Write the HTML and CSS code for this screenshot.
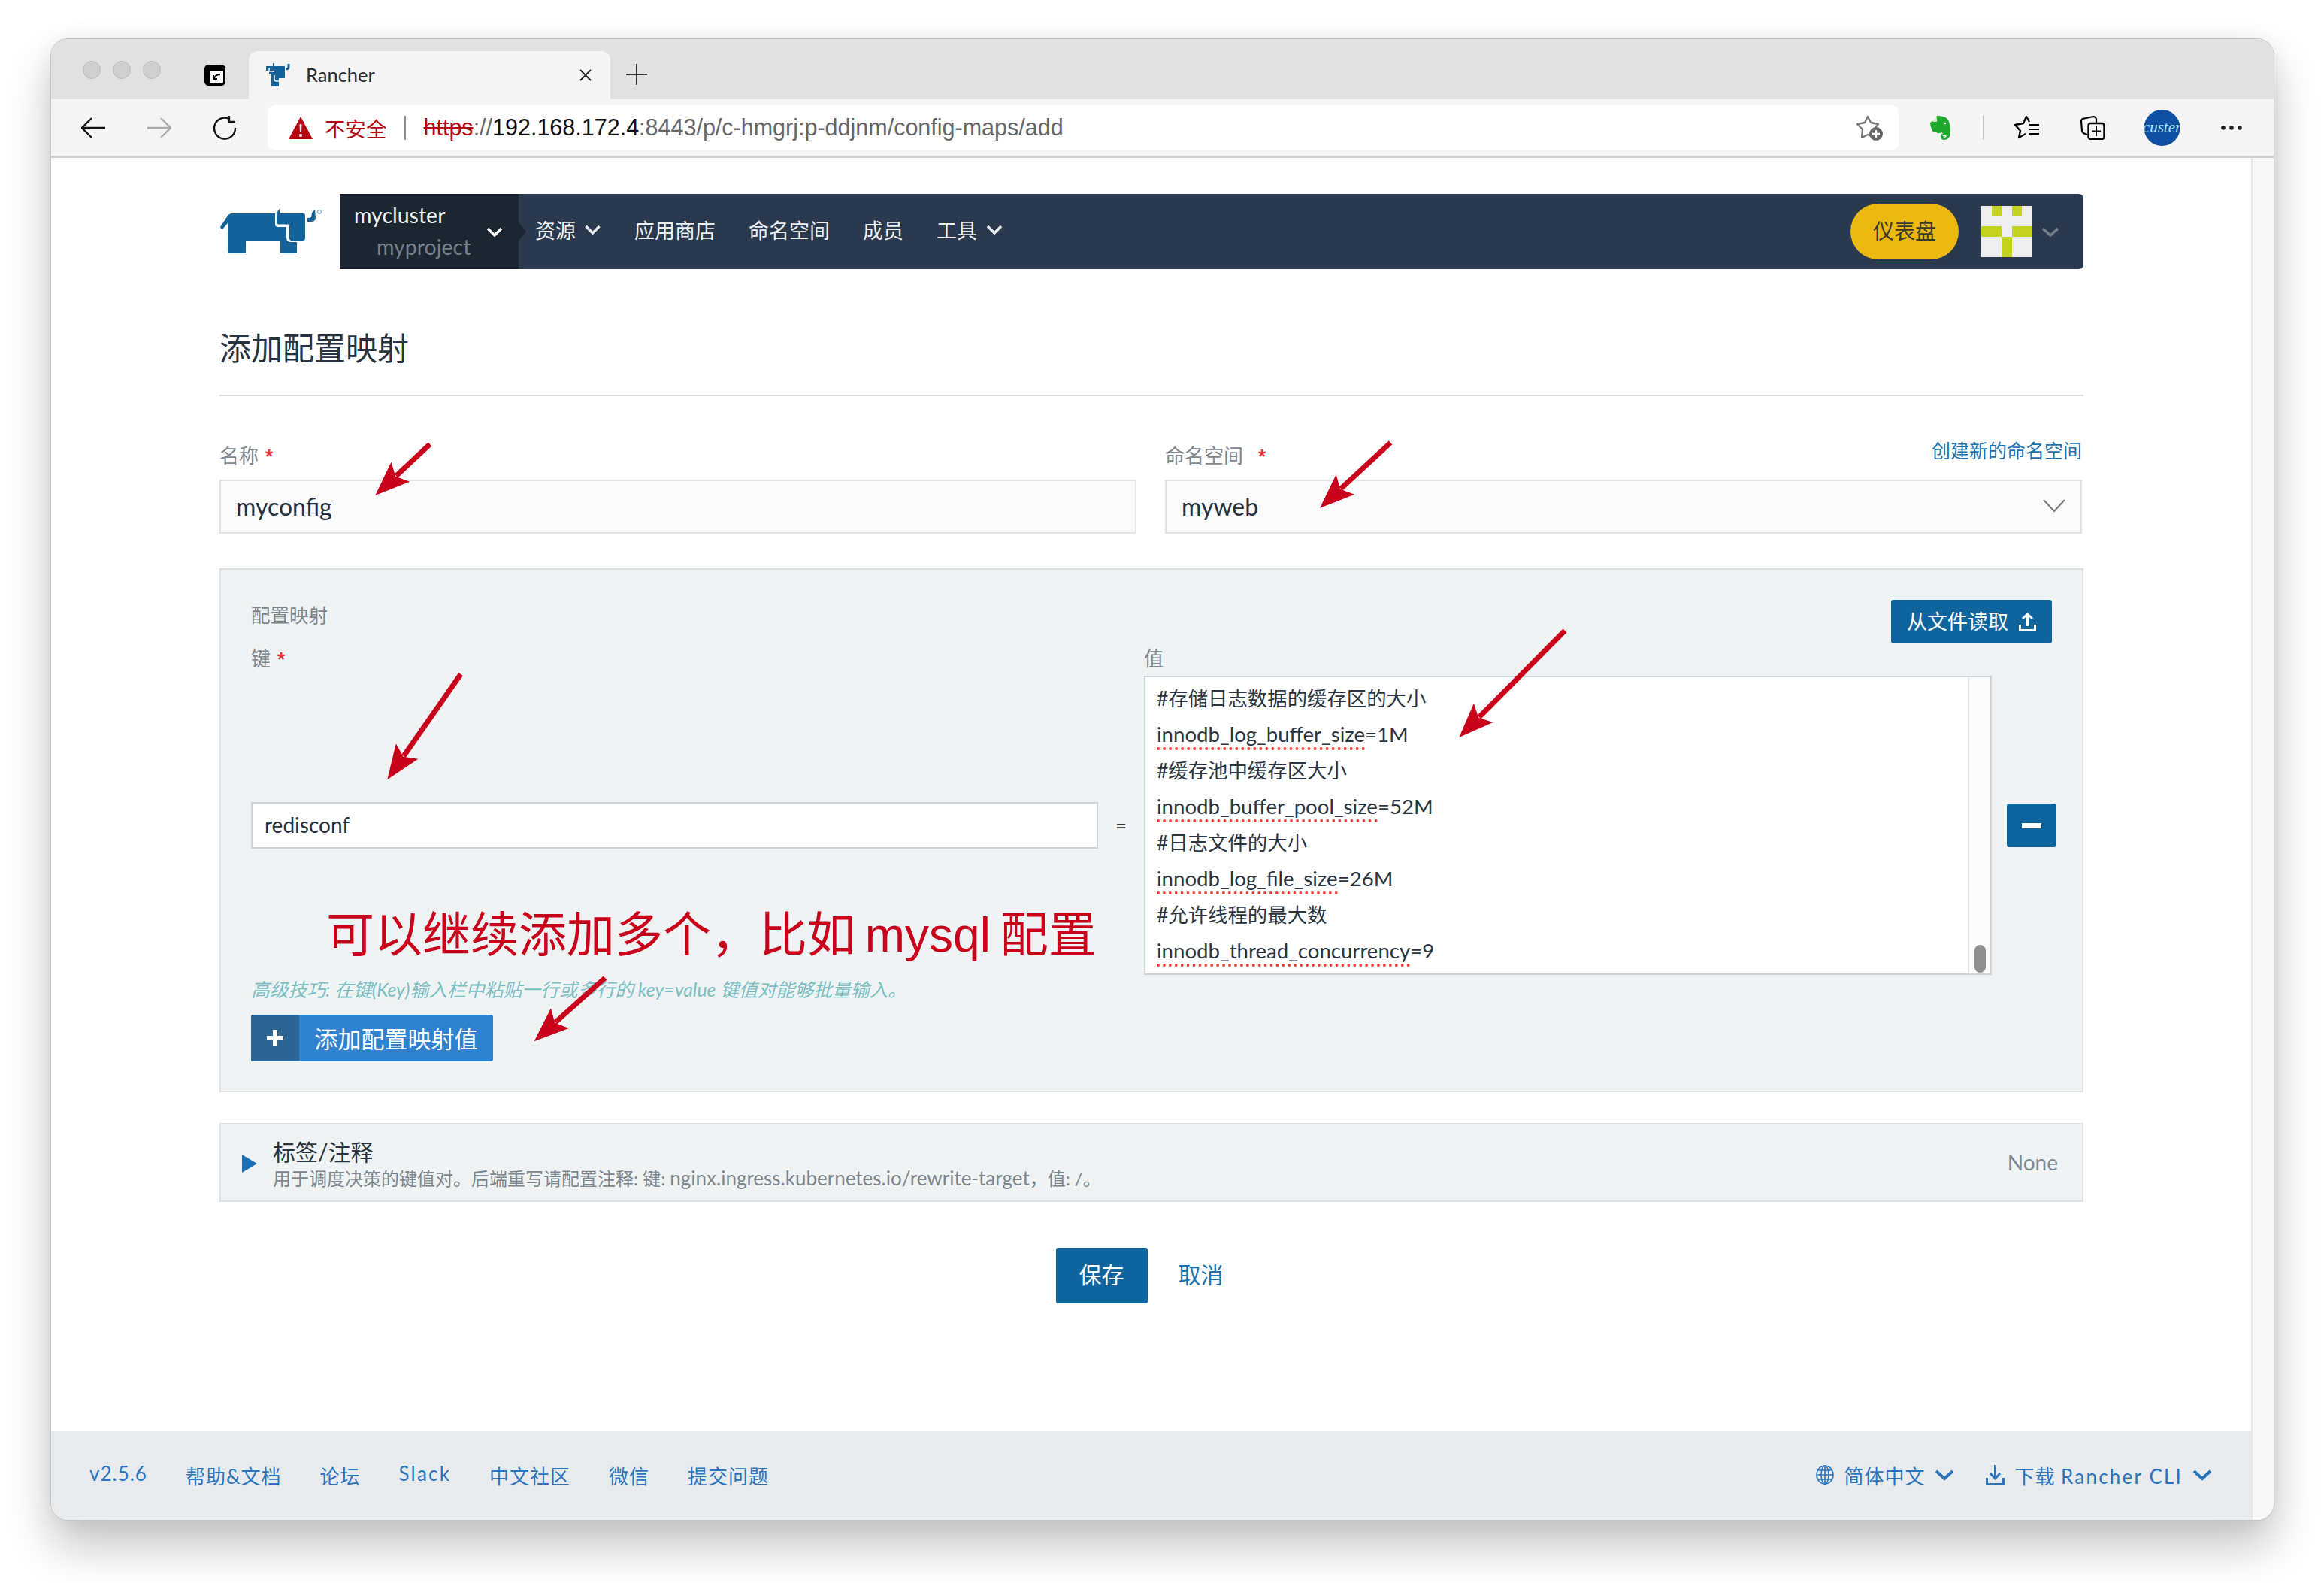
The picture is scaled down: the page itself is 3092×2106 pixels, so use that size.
FILE: index.html
```html
<!DOCTYPE html>
<html lang="zh-CN">
<head>
    <meta charset="UTF-8">
    <title>Rancher</title>
    <link rel="stylesheet" href="styles.css">
</head>
<body>

    <div class="window">
        <div class="tabbar">
            <div class="lights"><i></i><i></i><i></i></div>
            <svg class="tablist" width="28" height="28" viewBox="0 0 28 28">
                <rect x="1.500" y="1.500" width="25" height="25" rx="4" fill="#fff" stroke="#000" stroke-width="3"/>
                <path d="M2 2H26V8H8V26H2Z" fill="#000"/>
                <path d="M21 13Q15 13 12.500 18.500M12 14V19H17" fill="none" stroke="#000" stroke-width="2"/>
            </svg>
            <div class="tab">
                <svg class="favicon" width="34" height="31" viewBox="0 0 34 31">
                    <path fill="#14639b" d="M1 4H10V0L12 0V4H25Q26 4 26 5V19Q26 20 25 20H18V30Q18 31 17 31H9Q8 31 8 30V14H5V10H1Z"/>
                    <path fill="none" stroke="#f5f5f5" stroke-width="1.500" d="M5 6V11H12M12 16V22Q12 24 15 24H18"/>
                    <path fill="none" stroke="#14639b" stroke-width="3" d="M31 1V5Q31 8 27 8"/>
                </svg>
                <span class="tab-title">Rancher</span>
                <svg class="tab-close" width="16" height="16" viewBox="0 0 16 16"><path d="M1 1L15 15M15 1L1 15" stroke="#222" stroke-width="2"/></svg>
            </div>
            <svg class="tab-new" width="28" height="28" viewBox="0 0 28 28"><path d="M14 0V28M0 14H28" stroke="#333" stroke-width="2"/></svg>
        </div>

        <div class="toolbar">
            <svg class="tool-back" width="32" height="28" viewBox="0 0 32 28"><path d="M32 14H2M14 1L1 14L14 27" fill="none" stroke="#111" stroke-width="2.400"/></svg>
            <svg class="tool-forward" width="32" height="28" viewBox="0 0 32 28"><path d="M0 14H30M18 1L31 14L18 27" fill="none" stroke="#aaa" stroke-width="2.400"/></svg>
            <svg class="tool-reload" width="33" height="32" viewBox="0 0 33 32"><path d="M22 4A14 14 0 1 0 30 16" fill="none" stroke="#111" stroke-width="2.400"/><path d="M22 0V8H30" fill="none" stroke="#111" stroke-width="2.400"/></svg>
            <div class="address">
                <svg width="32" height="30" viewBox="0 0 32 30"><path d="M16 0L32 30H0Z" fill="#b5050e"/><path d="M14.500 10H17.500L17 21H15Z" fill="#fff"/><circle cx="16" cy="25" r="2" fill="#fff"/></svg>
                <span class="insecure">不安全</span>
                <span class="address-sep"></span>
                <span class="url"><s>https</s><em>://</em><b>192.168.172.4</b><em>:8443/p/c-hmgrj:p-ddjnm/config-maps/add</em></span>
                <svg class="star-add" width="36" height="34" viewBox="0 0 36 34">
                    <path d="M15 2L19 10L29 12L23 19L24 30L15 26L7 30L8 19L1 12L11 10Z" fill="none" stroke="#777" stroke-width="2.400" stroke-linejoin="round"/>
                    <circle cx="26" cy="25" r="9" fill="#666"/><path d="M26 20V30M21 25H31" stroke="#fff" stroke-width="2.400"/>
                </svg>
            </div>
            <svg class="ext-note" width="28" height="32" viewBox="0 0 28 32">
                <path fill="#1fa82e" d="M9 0Q14 0 17 1Q24 2 26 11Q28 20 26 27Q24 32 18 32Q13 31 14 26Q15 24 17 24Q16 22 15 22Q11 24 8 22Q3 22 2 18Q0 13 0 9L3 7H7Q8 6 8 3Z"/>
                <path fill="#cfe9cf" d="M9 2V8H3Z"/>
                <path fill="none" stroke="#fff" stroke-width="1.200" d="M17 27Q19 25 21 27Q20 29 18 28"/>
                <circle cx="20" cy="10" r="1.300" fill="#fff"/>
            </svg>
            <span class="tool-sep"></span>
            <svg class="tool-fav" width="33" height="31" viewBox="0 0 33 31"><path d="M20 8L16 1L12 10L1 12L8 20L6 29L15 24" fill="none" stroke="#000" stroke-width="2.400" stroke-linejoin="round"/><path d="M20 12H33M20 18H33M20 24H33" stroke="#000" stroke-width="2.200"/></svg>
            <svg class="tool-coll" width="33" height="32" viewBox="0 0 33 32"><path d="M9 25L4 23Q2 22 2 20L1 7Q1 5 3 4L17 1Q20 1 21 4V9" fill="none" stroke="#000" stroke-width="2.200"/><rect x="10.500" y="10" width="21" height="21" rx="3" fill="none" stroke="#000" stroke-width="2.400"/><path d="M21 14V27M15 20.500H27" stroke="#000" stroke-width="2"/></svg>
            <svg class="profile" width="49" height="48" viewBox="0 0 49 48"><circle cx="24.500" cy="24" r="24" fill="#0f4fa3"/><text x="24.500" y="30" text-anchor="middle" class="profile-text">custer</text></svg>
            <svg class="tool-more" width="28" height="6" viewBox="0 0 28 6"><circle cx="3" cy="3" r="2.800"/><circle cx="14" cy="3" r="2.800"/><circle cx="25" cy="3" r="2.800"/></svg>
        </div>

        <div class="content">
            <div class="page">
                <main class="main">
                    <header class="topnav">
                        <svg class="logo" width="136" height="60" viewBox="0 0 136 60">
                            <path fill="#14639b" d="M15 6H73V20Q73 24 77 24H88V38Q88 44 94 44H102V57Q102 59 100 59H82Q80 59 80 57V42H34V57Q34 59 32 59H12Q10 59 10 57V19L3 27Q1 27 0 24L10 9Q12 6 15 6Z"/>
                            <path fill="#14639b" d="M79 0L75 5V18Q75 20.500 78 20.500H92V39Q92 42 95 42H110Q113 42 113 39V9Q113 6 110 6H79Z"/>
                            <path fill="#14639b" d="M126 1L122 5L121 11Q120 12 116 12V17H120Q127 17 127 12Z"/>
                            <circle cx="132" cy="4" r="2.500" fill="none" stroke="#5b93bd" stroke-width="1"/>
                        </svg>
                        <nav class="nav">
                            <div class="switcher">
                                <div class="switcher-text"><span class="cluster">mycluster</span><span class="project">myproject</span></div>
                                <svg class="chev" width="22" height="13" viewBox="0 0 22 13"><path d="M2 2L11 11L20 2" fill="none" stroke="#fff" stroke-width="3.500"/></svg>
                            </div>
                            <div class="nav-items">
                                <a>资源<svg class="chev" width="23" height="13" viewBox="0 0 22 13"><path d="M2 2L11 11L20 2" fill="none" stroke="#e8ecf0" stroke-width="3.500"/></svg></a>
                                <a>应用商店</a>
                                <a>命名空间</a>
                                <a>成员</a>
                                <a>工具<svg class="chev" width="24" height="13" viewBox="0 0 22 13"><path d="M2 2L11 11L20 2" fill="none" stroke="#e8ecf0" stroke-width="3.500"/></svg></a>
                            </div>
                            <button class="dash">仪表盘</button>
                            <div class="avatar">
                                <i class="c2"></i><i class="c4"></i>
                                <i class="c1 r3"></i><i class="c2 r3"></i><i class="c4 r3"></i><i class="c5 r3"></i>
                                <i class="c3 r4"></i><i class="c3 r5"></i>
                            </div>
                            <svg class="chev user-chev" width="24" height="13" viewBox="0 0 24 13"><path d="M2 2L12 11L22 2" fill="none" stroke="#75808c" stroke-width="3.500"/></svg>
                        </nav>
                    </header>

                    <h1 class="title">添加配置映射</h1>

                    <div class="name-row">
                        <div>
                            <div class="label-line"><label class="lbl">名称<span class="req">*</span></label></div>
                            <input class="field" value="myconfig">
                        </div>
                        <div>
                            <div class="label-line">
                                <label class="lbl">命名空间<span class="req req-far">*</span></label>
                                <a class="link-new">创建新的命名空间</a>
                            </div>
                            <div class="field field-select">
                                <span>myweb</span>
                                <svg width="30" height="18" viewBox="0 0 30 18"><path d="M1 1L15 16L29 1" fill="none" stroke="#6d7780" stroke-width="2"/></svg>
                            </div>
                        </div>
                    </div>

                    <section class="panel map-panel">
                        <div class="panel-head">
                            <span class="lbl">配置映射</span>
                            <button class="btn btn-read"><span>从文件读取</span>
                                <svg width="23" height="25" viewBox="0 0 23 25"><path d="M11.500 18V2M5 8L11.500 2L18 8M1.500 16V23.500H21.500V16" fill="none" stroke="#fff" stroke-width="3"/></svg>
                            </button>
                        </div>
                        <div class="kv-labels">
                            <span class="lbl">键<span class="req">*</span></span>
                            <span class="lbl">值</span>
                        </div>
                        <div class="kv-row">
                            <input class="key-input" value="redisconf">
                            <span class="eq">=</span>
                            <div class="value-box">
                                <div class="value-lines">
                                    <div>#存储日志数据的缓存区的大小</div>
                                    <div class="latin"><span class="spell">innodb_log_buffer_size</span>=1M</div>
                                    <div>#缓存池中缓存区大小</div>
                                    <div class="latin"><span class="spell">innodb_buffer_pool_size</span>=52M</div>
                                    <div>#日志文件的大小</div>
                                    <div class="latin"><span class="spell">innodb_log_file_size</span>=26M</div>
                                    <div>#允许线程的最大数</div>
                                    <div class="latin"><span class="spell">innodb_thread_concurrency</span>=9</div>
                                </div>
                                <div class="value-scroll"><i></i></div>
                            </div>
                            <button class="btn btn-minus"><i></i></button>
                        </div>
                        <p class="hint">高级技巧: 在键(Key)输入栏中粘贴一行或多行的 key=value 键值对能够批量输入。</p>
                        <button class="btn-add">
                            <span class="btn-add-icon"><svg width="24" height="24" viewBox="0 0 24 24"><path d="M12 1V23M1 12H23" stroke="#fff" stroke-width="6"/></svg></span>
                            <span class="btn-add-text">添加配置映射值</span>
                        </button>
                    </section>

                    <section class="panel labels-panel">
                        <i class="tri"></i>
                        <div class="labels-text">
                            <div class="labels-title">标签/注释</div>
                            <div class="labels-sub">用于调度决策的键值对。后端重写请配置注释: 键: <span class="sub-latin">nginx.ingress.kubernetes.io/rewrite-target</span>，值: /。</div>
                        </div>
                        <span class="labels-none">None</span>
                    </section>

                    <div class="actions">
                        <button class="btn btn-save">保存</button>
                        <a class="cancel">取消</a>
                    </div>
                </main>

                <footer class="footer">
                    <div class="foot-left">
                        <a>v2.5.6</a><a>帮助&amp;文档</a><a>论坛</a><a class="foot-wide">Slack</a><a>中文社区</a><a>微信</a><a>提交问题</a>
                    </div>
                    <div class="foot-right">
                        <a>
                            <svg width="24" height="26" viewBox="0 0 24 26"><g fill="none" stroke="#2b75bd" stroke-width="1.600"><ellipse cx="12" cy="13" rx="11" ry="12"/><ellipse cx="12" cy="13" rx="5" ry="12"/><path d="M12 1V25M1 13H23M3 7H21M3 19H21"/></g></svg>
                            <span>简体中文</span>
                            <svg width="26" height="15" viewBox="0 0 26 15"><path d="M2 2L13 12L24 2" fill="none" stroke="#2b75bd" stroke-width="4"/></svg>
                        </a>
                        <a>
                            <svg width="25" height="27" viewBox="0 0 25 27"><path d="M12.500 0V17M6 11L12.500 18L19 11" fill="none" stroke="#2b75bd" stroke-width="3"/><path d="M1.500 17V25.500H23.500V17" fill="none" stroke="#2b75bd" stroke-width="3"/></svg>
                            <span>下载 <span class="foot-wide">Rancher CLI</span></span>
                            <svg width="26" height="15" viewBox="0 0 26 15"><path d="M2 2L13 12L24 2" fill="none" stroke="#2b75bd" stroke-width="4"/></svg>
                        </a>
                    </div>
                </footer>
            </div>
            <div class="strip"></div>
        </div>
    </div>

    <!-- red markup drawn over the screenshot -->
    <div class="note">可以继续添加多个，比如 mysql 配置</div>
    <svg class="arrows" width="3092" height="2106">
        <defs>
            <marker id="head" markerUnits="userSpaceOnUse" markerWidth="60" markerHeight="50" refX="8" refY="22" orient="auto">
                <path d="M0 4L46 22L0 40L9 22Z" fill="#c9021c"/>
            </marker>
        </defs>
        <g stroke="#c9021c" stroke-width="7">
            <line x1="572" y1="591" x2="527" y2="633" marker-end="url(#head)"/>
            <line x1="1850" y1="589" x2="1784" y2="650" marker-end="url(#head)"/>
            <line x1="613" y1="897" x2="537" y2="1006" marker-end="url(#head)"/>
            <line x1="2082" y1="839" x2="1968" y2="954" marker-end="url(#head)"/>
            <line x1="805" y1="1301" x2="739" y2="1360" marker-end="url(#head)"/>
        </g>
    </svg>

</body>
</html>
```

FILE: styles.css
```css
* {
    box-sizing: border-box;
}
body {
    margin: 0;
    height: 2106px;
    overflow: hidden;
    position: relative;
    background-color: #fff;
    font-family: Lato, "Noto Sans CJK SC", sans-serif;
    padding: 52px 67px 84px 68px;
    color: #1f2a36;
}
a {
    text-decoration: none;
}
button {
    font-family: inherit;
    border: 0;
    cursor: pointer;
}

/* browser frame */
.window {
    height: 1970px;
    display: flex;
    flex-direction: column;
    border-radius: 22px;
    overflow: hidden;
    box-shadow: 0 0 0 1px #c4c4c4, 0 34px 60px rgba(0,0,0,0.24), 0 0 30px rgba(0,0,0,0.06);
    background-color: #fff;
}
.tabbar {
    height: 80px;
    flex: none;
    background-color: #e1e1e1;
    display: flex;
    align-items: flex-end;
    padding-left: 42px;
}
.lights {
    display: flex;
    gap: 16px;
    align-self: flex-start;
    margin-top: 29px;
}
.lights i {
    width: 24px;
    height: 24px;
    border-radius: 50%;
    background-color: #cfcfcf;
    border: 1px solid #bdbdbd;
}
.tablist {
    align-self: flex-start;
    margin: 34px 0 0 58px;
}
.tab {
    width: 481px;
    height: 64px;
    margin-left: 31px;
    background-color: #f5f5f5;
    border-radius: 12px 12px 0 0;
    display: flex;
    align-items: center;
    padding: 0 25px 0 22px;
}
.tab-title {
    font-size: 25.500px;
    line-height: 30px;
    margin: -3px 0 0 20px;
    flex: 1;
    color: #2c2c2c;
}
.favicon {
    margin-top: -2px;
}
.tab-new {
    align-self: flex-start;
    margin: 33px 0 0 21px;
}
.toolbar {
    height: 78px;
    flex: none;
    background-color: #f5f5f5;
    border-bottom: 3px solid #cfcfcf;
    display: flex;
    align-items: center;
    padding-left: 40px;
}
.tool-forward {
    margin-left: 56px;
}
.tool-reload {
    margin-left: 55px;
}
.address {
    width: 2170px;
    height: 60px;
    margin-left: 40px;
    background-color: #fff;
    border-radius: 10px;
    display: flex;
    align-items: center;
    padding-left: 28px;
}
.insecure {
    color: #b5050e;
    margin-left: 16px;
    font-size: 27.500px;
}
.address-sep {
    width: 2px;
    height: 32px;
    background-color: #8c8c8c;
    margin: 0 24px 0 23px;
}
.url {
    flex: 1;
    font-family: "Liberation Sans", "Noto Sans CJK SC", sans-serif;
    font-size: 30.500px;
}
.url s {
    color: #b5050e;
}
.url em {
    font-style: normal;
    color: #666;
}
.url b {
    font-weight: normal;
    color: #111;
}
.star-add {
    margin-right: 20px;
}
.ext-note {
    margin-left: 42px;
}
.tool-sep {
    width: 2px;
    height: 32px;
    background-color: #c4c4c4;
    margin-left: 42px;
}
.tool-fav {
    margin-left: 40px;
}
.tool-coll {
    margin-left: 55px;
}
.profile {
    margin-left: 51px;
}
.profile-text {
    font-family: "Liberation Serif", serif;
    font-style: italic;
    font-size: 21px;
    fill: #a9e6f5;
}
.tool-more {
    margin-left: 54px;
    fill: #222;
}

/* page */
.content {
    flex: 1;
    display: flex;
    min-height: 0;
}
.page {
    flex: 1;
    display: flex;
    flex-direction: column;
}
.strip {
    width: 30px;
    background-color: #f8f8f8;
    border-left: 2px solid #e8e8e8;
}
.main {
    flex: 1;
    padding: 48px 223px 0 224px;
}
.topnav {
    display: flex;
    align-items: center;
    height: 100px;
}
.logo {
    flex: none;
    margin-left: 1px;
}
.nav {
    flex: 1;
    height: 100px;
    margin-left: 23px;
    background-color: #2a394e;
    border-radius: 0 6px 6px 0;
    display: flex;
    align-items: center;
    color: #edf0f3;
    font-size: 27px;
}
.switcher {
    position: relative;
    width: 238px;
    height: 100%;
    background-color: #1c2631;
    display: flex;
    align-items: center;
    flex: none;
    padding-left: 19px;
}
.switcher::after {
    content: "";
    position: absolute;
    right: -10px;
    top: 38px;
    border-left: 10px solid #1c2631;
    border-top: 12px solid transparent;
    border-bottom: 12px solid transparent;
}
.switcher-text {
    display: flex;
    flex-direction: column;
    width: 176px;
    font-size: 28.500px;
}
.cluster {
    line-height: 40px;
}
.project {
    line-height: 44px;
    padding-left: 30px;
    color: #747f8c;
}
.nav-items {
    display: flex;
    gap: 44px;
    margin-left: 22px;
    flex: 1;
    align-items: center;
}
.nav-items a {
    display: flex;
    align-items: center;
    gap: 11px;
    padding-bottom: 5px;
}
.dash {
    width: 144px;
    height: 74px;
    border-radius: 37px;
    background-color: #ebb80f;
    color: #3b3a2a;
    font-size: 28px;
    padding-bottom: 6px;
}
.avatar {
    width: 68px;
    height: 68px;
    margin-left: 30px;
    background-color: #eee;
    display: grid;
    grid-template-columns: repeat(5, 1fr);
    grid-template-rows: repeat(5, 1fr);
}
.avatar i {
    background-color: #c4d41e;
    grid-row: 1;
}
.avatar .c1 { grid-column: 1; }
.avatar .c2 { grid-column: 2; }
.avatar .c3 { grid-column: 3; }
.avatar .c4 { grid-column: 4; }
.avatar .c5 { grid-column: 5; }
.avatar .r3 { grid-row: 3; }
.avatar .r4 { grid-row: 4; }
.avatar .r5 { grid-row: 5; }
.user-chev {
    margin: 0 32px 0 12px;
}
.title {
    margin: 80px 0 0;
    padding-bottom: 37px;
    border-bottom: 2px solid #dcdfe2;
    font-size: 42px;
    font-weight: 400;
    line-height: 50px;
    color: #26323f;
}

/* form */
.name-row {
    display: grid;
    grid-template-columns: 1fr 1fr;
    gap: 38px;
    margin: 61px 2px 0 0;
}
.label-line {
    height: 36px;
    margin-bottom: 14px;
    display: flex;
    justify-content: space-between;
}
.lbl {
    font-size: 26px;
    line-height: 36px;
    color: #7d868d;
}
.req {
    color: #e8323c;
    margin-left: 9px;
    font-family: "Liberation Sans", sans-serif;
    font-weight: bold;
    font-size: 26px;
}
.req-far {
    margin-left: 20px;
}
.link-new {
    font-size: 25px;
    line-height: 22px;
    color: #1a72b0;
}
.field {
    display: flex;
    align-items: center;
    justify-content: space-between;
    width: 100%;
    height: 72px;
    padding: 0 20px 2px;
    border: 2px solid #dfe3e6;
    background-color: #fbfbfb;
    font-family: inherit;
    font-size: 32px;
    color: #24303c;
    outline: none;
}
.panel {
    border: 2px solid #dce1e3;
    background-color: #eff3f3;
}
.map-panel {
    height: 697px;
    margin-top: 46px;
    padding: 40px 40px 0;
}
.panel-head {
    display: flex;
    justify-content: space-between;
    height: 58px;
}
.panel-head .lbl {
    font-size: 25.500px;
    line-height: 40px;
}
.btn {
    background-color: #10659e;
    color: #fff;
    border-radius: 3px;
}
.btn-read {
    width: 214px;
    height: 58px;
    font-size: 27px;
    display: flex;
    align-items: center;
    justify-content: center;
    gap: 14px;
    white-space: nowrap;
}
.btn-read span {
    padding-bottom: 3px;
}
.kv-labels {
    display: grid;
    grid-template-columns: 1188px 1fr;
    height: 43px;
    padding-top: 2px;
}
.kv-row {
    display: grid;
    grid-template-columns: 1127px 61px 1128px 86px;
    align-items: center;
    height: 398px;
    margin-right: -6px;
}
.key-input {
    height: 62px;
    border: 2px solid #cdd5d8;
    background-color: #fff;
    padding: 0 16px 2px;
    font-family: inherit;
    font-size: 28px;
    color: #24303c;
    outline: none;
}
.eq {
    text-align: center;
    font-size: 26px;
    color: #333;
}
.value-box {
    height: 398px;
    display: flex;
    border: 2px solid #cdd5d8;
    background-color: #fff;
    overflow: hidden;
}
.value-lines {
    flex: 1;
    padding: 4px 0 0 15px;
    font-size: 26.400px;
    line-height: 48px;
    color: #2a3440;
}
.value-lines .latin {
    font-size: 27.600px;
}
.spell {
    border-bottom: 4px dotted #e8403f;
    padding-bottom: 1px;
}
.value-scroll {
    width: 30px;
    background-color: #fbfbfb;
    border-left: 2px solid #e6e6e6;
    position: relative;
}
.value-scroll i {
    position: absolute;
    left: 7px;
    bottom: 1px;
    width: 15px;
    height: 37px;
    border-radius: 8px;
    background-color: #8f8f8f;
}
.btn-minus {
    width: 66px;
    height: 58px;
    justify-self: end;
    display: flex;
    align-items: center;
    justify-content: center;
}
.btn-minus i {
    width: 26px;
    height: 7px;
    background-color: #fff;
}
.hint {
    margin: 6px 0 0;
    font-size: 24.800px;
    line-height: 28px;
    font-style: italic;
    color: #7bbfc4;
    white-space: nowrap;
}
.btn-add {
    display: flex;
    width: 322px;
    height: 62px;
    margin-top: 19px;
    padding: 0;
    border-radius: 3px;
    overflow: hidden;
    background-color: #2e82cf;
    color: #fff;
    font-size: 31px;
    align-items: center;
}
.btn-add-icon {
    width: 64px;
    height: 100%;
    background-color: #2d6496;
    display: flex;
    align-items: center;
    justify-content: center;
}
.btn-add-text {
    flex: 1;
    text-align: center;
    padding-bottom: 2px;
}
.labels-panel {
    height: 105px;
    margin-top: 41px;
    display: flex;
    align-items: center;
    padding: 0 32px 0 28px;
}
.tri {
    border-left: 20px solid #1a6fb8;
    border-top: 12px solid transparent;
    border-bottom: 12px solid transparent;
    margin-top: 2px;
}
.labels-text {
    flex: 1;
    margin-left: 21px;
    padding-top: 4px;
}
.labels-title {
    font-size: 30px;
    line-height: 36px;
    color: #2a3440;
}
.labels-sub {
    font-size: 24px;
    line-height: 32px;
    color: #7d868d;
    margin-top: 1px;
}
.sub-latin {
    font-size: 26px;
}
.labels-none {
    font-size: 28px;
    color: #7e8a93;
    padding-bottom: 2px;
}
.actions {
    display: flex;
    align-items: center;
    justify-content: center;
    gap: 41px;
    margin-top: 61px;
    padding-right: 32px;
}
.btn-save {
    width: 122px;
    height: 74px;
    font-size: 30px;
    padding-bottom: 7px;
}
.cancel {
    font-size: 30px;
    color: #1a72b0;
    padding-bottom: 6px;
}

/* footer */
.footer {
    height: 118px;
    flex: none;
    background-color: #e7ebee;
    display: flex;
    justify-content: space-between;
    align-items: center;
    padding: 0 52px 2px 51px;
    font-size: 26px;
    color: #2b75bd;
    letter-spacing: 1px;
}
.foot-left {
    display: flex;
    gap: 51px;
}
.foot-wide {
    letter-spacing: 2.200px;
}
.foot-right {
    display: flex;
    gap: 42px;
}
.foot-right a {
    display: flex;
    align-items: center;
    gap: 13px;
    white-space: nowrap;
}

/* annotations */
.note {
    position: absolute;
    left: 434px;
    top: 1200px;
    font-family: "Liberation Sans", "Noto Sans CJK SC", sans-serif;
    font-size: 64px;
    line-height: 88px;
    word-spacing: -5px;
    color: #c9021c;
    white-space: nowrap;
}
.arrows {
    position: absolute;
    left: 0;
    top: 0;
    pointer-events: none;
}
```
